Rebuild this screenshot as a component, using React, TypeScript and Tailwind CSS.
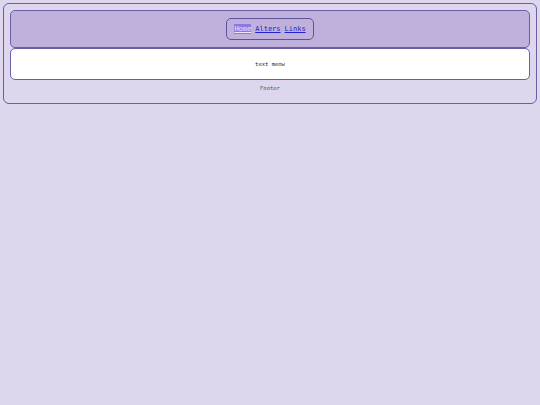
import React from 'react';

const App = () => {
    return (
        <div className="min-h-screen bg-[#ddd6ec] p-[3px] font-['DejaVu_Sans_Mono',monospace]">
            <div className="border border-[#6b5ea6] rounded-[6px] p-[6px] pb-[7px]">
                <header className="flex justify-center bg-[#c0b1dc] border border-[#6b5ea6] rounded-[5px] py-[7px]">
                    <nav className="flex items-center gap-[4px] h-[22px] px-[7px] border border-[#5f5296] rounded-[5px] text-[7px]">
                        <a href="#" className="bg-[#8a7ae6] text-[#ece8ff] underline">Home</a>
                        <a href="#" className="text-[#2323c8] underline">Alters</a>
                        <a href="#" className="text-[#2323c8] underline">Links</a>
                    </nav>
                </header>
                <main className="flex items-center justify-center h-[32px] bg-white border border-[#6b5ea6] rounded-[5px] text-[5.5px] text-[#222]">
                    text meow
                </main>
                <footer className="flex items-center justify-center h-[16px] text-[5.5px] text-[#555]">
                    Footer
                </footer>
            </div>
        </div>
    );
};

export default App;
